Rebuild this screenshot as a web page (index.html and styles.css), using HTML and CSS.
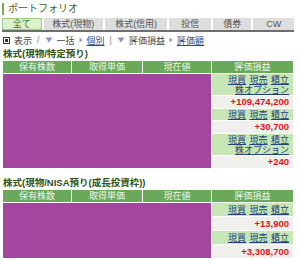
FILE: index.html
```html
<!DOCTYPE html>
<html lang="ja">
<head>
<meta charset="utf-8">
<link rel="stylesheet" href="styles.css">
</head>
<body>
<div class="page">
  <div class="title">ポートフォリオ</div>
  <div class="tabs">
    <div class="tab on t1">全て</div>
    <div class="tab t2">株式(現物)</div>
    <div class="tab t3">株式(信用)</div>
    <div class="tab t4">投信</div>
    <div class="tab t5">債券</div>
    <div class="tab t6">CW</div>
  </div>
  <div class="tools">
    <svg class="ico" width="7" height="7" viewBox="0 0 7 7"><rect x="0.5" y="0.5" width="6" height="6" fill="#fff" stroke="#333"/><rect x="2" y="2" width="3" height="3" fill="#333"/></svg>
    <span class="lbl">表示</span>
    <span class="sep">/</span>
    <svg class="ico" width="8" height="6" viewBox="0 0 8 6"><path d="M0.5 0.5 H7.5 L4 5.5 Z" fill="#8896b8"/></svg>
    <span class="lbl">一括</span>
    <svg class="ico" width="4" height="6" viewBox="0 0 4 6"><path d="M0.5 0.5 L3.5 3 L0.5 5.5 Z" fill="#999"/></svg>
    <a class="lnk">個別</a>
    <span class="sep">|</span>
    <svg class="ico" width="8" height="6" viewBox="0 0 8 6"><path d="M0.5 0.5 H7.5 L4 5.5 Z" fill="#8896b8"/></svg>
    <span class="lbl">評価損益</span>
    <svg class="ico" width="4" height="6" viewBox="0 0 4 6"><path d="M0.5 0.5 L3.5 3 L0.5 5.5 Z" fill="#999"/></svg>
    <a class="lnk">評価額</a>
  </div>

  <div class="sec-title">株式(現物/特定預り)</div>
  <div class="grid">
    <div class="th">保有株数</div>
    <div class="th">取得単価</div>
    <div class="th">現在値</div>
    <div class="th">評価損益</div>
    <div class="mask r6"></div>
    <div class="links"><div><a>現買</a> <a>現売</a> <a>積立</a></div><div><a>株オプション</a></div></div>
    <div class="val">+109,474,200</div>
    <div class="links"><div><a>現買</a> <a>現売</a> <a>積立</a></div></div>
    <div class="val">+30,700</div>
    <div class="links"><div><a>現買</a> <a>現売</a> <a>積立</a></div><div><a>株オプション</a></div></div>
    <div class="val">+240</div>
  </div>

  <div class="sec-title sec2">株式(現物/NISA預り(成長投資枠))</div>
  <div class="grid">
    <div class="th">保有株数</div>
    <div class="th">取得単価</div>
    <div class="th">現在値</div>
    <div class="th">評価損益</div>
    <div class="mask r4"></div>
    <div class="links tall"><div><a>現買</a> <a>現売</a> <a>積立</a></div></div>
    <div class="val tall">+13,900</div>
    <div class="links tall"><div><a>現買</a> <a>現売</a> <a>積立</a></div></div>
    <div class="val tall">+3,308,700</div>
  </div>
</div>
</body>
</html>
```

FILE: styles.css
```css
html, body {
  margin: 0;
  padding: 0;
  background: #fff;
}
body {
  font-family: "Liberation Sans", "Noto Sans CJK JP", sans-serif;
  font-size: 9px;
  color: #222;
}
.page {
  padding: 3px 0 0 2px;
  width: 292px;
}
.title {
  height: 12px;
  line-height: 12px;
  border-left: 2px solid #7aa84a;
  padding-left: 4px;
  font-size: 10px;
  color: #3d6620;
}
.tabs {
  display: flex;
  gap: 2px;
  margin-top: 3px;
  border-bottom: 2px solid #6e6e6e;
}
.tab {
  height: 12px;
  line-height: 12px;
  background: #dedede;
  text-align: center;
  color: #555;
  font-size: 9px;
}
.tab.on {
  background: #d9f2c6;
  box-shadow: inset 0 0 0 1px #9ccf85;
  color: #3b6a22;
}
.t1 { width: 40px; }
.t2 { width: 60px; }
.t3 { width: 63px; }
.t4 { width: 42px; }
.t5 { width: 39px; }
.t6 { width: 41px; }
.tools {
  display: flex;
  align-items: center;
  height: 12px;
  margin-top: 2px;
  padding-left: 1px;
  gap: 4px;
  color: #444;
}
.tools .ico {
  display: block;
}
.tools .sep {
  color: #888;
  margin: 0 1px;
}
.tools .lnk {
  color: #2a4a80;
  text-decoration: underline;
}
.sec-title {
  margin-top: 2px;
  height: 12px;
  line-height: 12px;
  font-weight: bold;
  font-size: 9.5px;
  color: #2f5418;
  padding-left: 1px;
}
.sec2 {
  margin-top: 9px;
}
.grid {
  display: grid;
  grid-template-columns: 68px 70px 68px 81px;
  column-gap: 1px;
  row-gap: 1px;
  margin-top: 1px;
  padding-left: 1px;
}
.th {
  background: #6aa85a;
  color: #eef6e8;
  text-align: center;
  height: 12px;
  line-height: 12px;
}
.mask {
  grid-column: 1 / 4;
  background: #a2469e;
}
.r6 { grid-row: span 6; }
.r4 { grid-row: span 4; }
.links {
  grid-column: 4;
  background: #c6e6b5;
  text-align: right;
  padding: 1px 4px 0 0;
  line-height: 10px;
  word-spacing: 1px;
}
.links a {
  color: #23417a;
  text-decoration: underline;
}
.val {
  grid-column: 4;
  background: #efefec;
  text-align: right;
  padding: 1px 4px 1px 0;
  line-height: 10px;
  font-size: 9.5px;
  color: #e0151a;
  font-weight: bold;
}
.tall {
  padding-top: 2px;
  padding-bottom: 1px;
}
```
